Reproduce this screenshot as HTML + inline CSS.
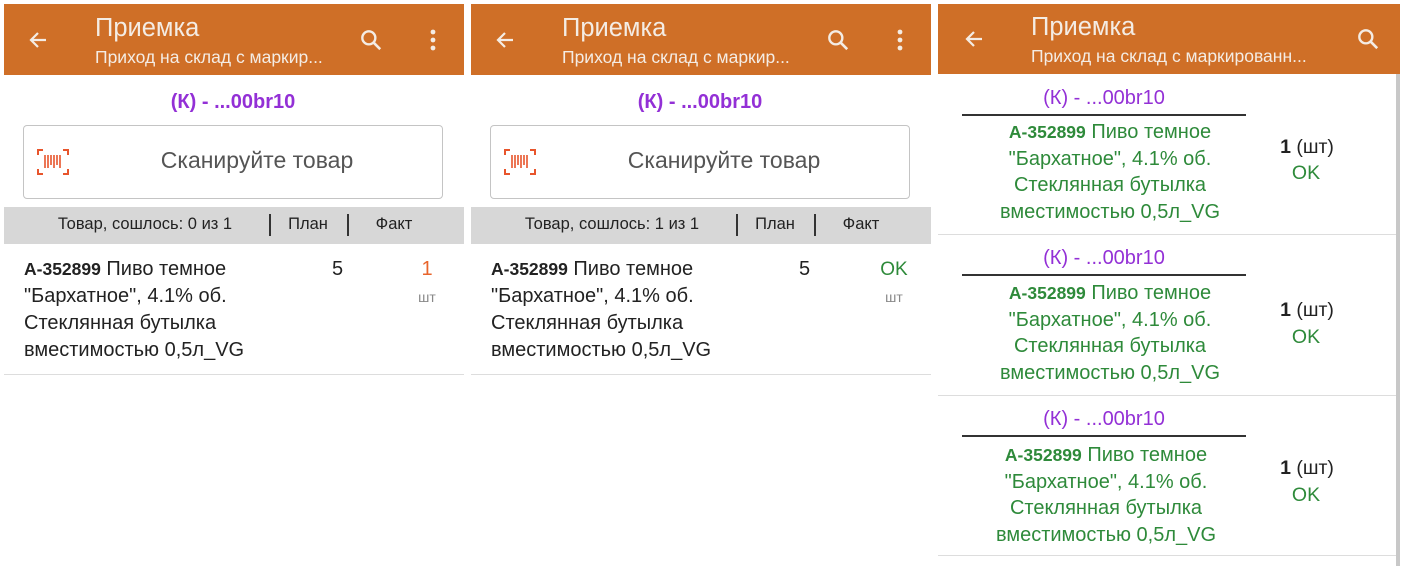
<!DOCTYPE html><html><head><meta charset="utf-8"><style>
*{margin:0;padding:0;box-sizing:border-box}
body{width:1408px;height:566px;background:#fff;position:relative;overflow:hidden;font-family:"Liberation Sans","Noto Sans CJK SC",sans-serif;color:#222}
.a{position:absolute;white-space:nowrap}
.hdr{position:absolute;top:4px;height:71px;background:#cf6f27}
.t{font-size:25.5px;color:#f4ece4}
.s{font-size:17.5px;color:#f4ece4}
.pu{color:#9330d6;font-size:20px}
.g{color:#2e8a3a;font-size:20px;text-align:center;line-height:26.7px}
.c{transform:translateX(-50%)}
.it{font-size:20px;line-height:27px}
.it b,.g b{font-size:17.5px}
</style></head><body>
<!-- panel 1 -->
<div class="hdr" style="left:4px;width:460px"></div>
<svg class="a" style="left:26px;top:28px" width="24" height="24" viewBox="0 0 24 24"><path d="M20 12H5M12 5l-7 7 7 7" stroke="#f4ece4" stroke-width="2.2" fill="none"/></svg>
<div class="a t" style="left:95px;top:14px">Приемка</div>
<div class="a s" style="left:95px;top:47px">Приход на склад с маркир...</div>
<svg class="a" style="left:358px;top:27px" width="26" height="26" viewBox="0 0 24 24"><circle cx="10" cy="10" r="6" stroke="#f4ece4" stroke-width="2.2" fill="none"/><path d="M14.5 14.5l6 6" stroke="#f4ece4" stroke-width="2.4"/></svg>
<svg class="a" style="left:429px;top:28px" width="8" height="24"><circle cx="4" cy="4" r="2.4" fill="#f4ece4"/><circle cx="4" cy="12" r="2.4" fill="#f4ece4"/><circle cx="4" cy="20" r="2.4" fill="#f4ece4"/></svg>
<div class="a pu c" style="left:233px;top:91px;font-weight:bold">(К) - ...00br10</div>
<div class="a" style="left:23px;top:125px;width:420px;height:74px;border:1.5px solid #c4c4c4;border-radius:4px"></div>
<svg class="a" style="left:37px;top:149px" width="32" height="26" viewBox="0 0 32 26"><path d="M1 6V1h5M26 1h5v5M31 20v5h-5M6 25H1v-5" stroke="#e8552c" stroke-width="2" fill="none"/><path d="M8 6v13M11 6v13M14 6v10M17 6v13M20 6v10M23 6v13" stroke="#e8552c" stroke-width="1.6"/></svg>
<div class="a c" style="left:257px;top:147px;font-size:23px;color:#555">Сканируйте товар</div>
<div class="a" style="left:4px;top:207px;width:460px;height:37px;background:#d7d7d7"></div>
<div class="a c" style="left:145px;top:215px;font-size:16.5px">Товар, сошлось: 0 из 1</div>
<div class="a" style="left:269px;top:214px;width:1.5px;height:22px;background:#333"></div>
<div class="a c" style="left:308px;top:215px;font-size:16.5px">План</div>
<div class="a" style="left:347px;top:214px;width:1.5px;height:22px;background:#333"></div>
<div class="a c" style="left:394px;top:215px;font-size:16.5px">Факт</div>
<div class="a it" style="left:24px;top:256px"><b>А-352899</b> Пиво темное<br>"Бархатное", 4.1% об.<br>Стеклянная бутылка<br>вместимостью 0,5л_VG</div>
<div class="a" style="left:332px;top:258px;font-size:20px">5</div>
<div class="a c" style="left:427px;top:258px;font-size:20px;color:#e8652c">1</div>
<div class="a c" style="left:427px;top:289px;font-size:14px;color:#888">шт</div>
<div class="a" style="left:4px;top:374px;width:460px;height:1px;background:#ddd"></div>
<!-- panel 2 -->
<div class="hdr" style="left:471px;width:460px"></div>
<svg class="a" style="left:493px;top:28px" width="24" height="24" viewBox="0 0 24 24"><path d="M20 12H5M12 5l-7 7 7 7" stroke="#f4ece4" stroke-width="2.2" fill="none"/></svg>
<div class="a t" style="left:562px;top:14px">Приемка</div>
<div class="a s" style="left:562px;top:47px">Приход на склад с маркир...</div>
<svg class="a" style="left:825px;top:27px" width="26" height="26" viewBox="0 0 24 24"><circle cx="10" cy="10" r="6" stroke="#f4ece4" stroke-width="2.2" fill="none"/><path d="M14.5 14.5l6 6" stroke="#f4ece4" stroke-width="2.4"/></svg>
<svg class="a" style="left:896px;top:28px" width="8" height="24"><circle cx="4" cy="4" r="2.4" fill="#f4ece4"/><circle cx="4" cy="12" r="2.4" fill="#f4ece4"/><circle cx="4" cy="20" r="2.4" fill="#f4ece4"/></svg>
<div class="a pu c" style="left:700px;top:91px;font-weight:bold">(К) - ...00br10</div>
<div class="a" style="left:490px;top:125px;width:420px;height:74px;border:1.5px solid #c4c4c4;border-radius:4px"></div>
<svg class="a" style="left:504px;top:149px" width="32" height="26" viewBox="0 0 32 26"><path d="M1 6V1h5M26 1h5v5M31 20v5h-5M6 25H1v-5" stroke="#e8552c" stroke-width="2" fill="none"/><path d="M8 6v13M11 6v13M14 6v10M17 6v13M20 6v10M23 6v13" stroke="#e8552c" stroke-width="1.6"/></svg>
<div class="a c" style="left:724px;top:147px;font-size:23px;color:#555">Сканируйте товар</div>
<div class="a" style="left:471px;top:207px;width:460px;height:37px;background:#d7d7d7"></div>
<div class="a c" style="left:612px;top:215px;font-size:16.5px">Товар, сошлось: 1 из 1</div>
<div class="a" style="left:736px;top:214px;width:1.5px;height:22px;background:#333"></div>
<div class="a c" style="left:775px;top:215px;font-size:16.5px">План</div>
<div class="a" style="left:814px;top:214px;width:1.5px;height:22px;background:#333"></div>
<div class="a c" style="left:861px;top:215px;font-size:16.5px">Факт</div>
<div class="a it" style="left:491px;top:256px"><b>А-352899</b> Пиво темное<br>"Бархатное", 4.1% об.<br>Стеклянная бутылка<br>вместимостью 0,5л_VG</div>
<div class="a" style="left:799px;top:258px;font-size:20px">5</div>
<div class="a c" style="left:894px;top:259px;font-size:19px;color:#2e8a3a">OK</div>
<div class="a c" style="left:894px;top:289px;font-size:14px;color:#888">шт</div>
<div class="a" style="left:471px;top:374px;width:460px;height:1px;background:#ddd"></div>
<!-- panel 3 -->
<div class="hdr" style="left:938px;width:462px;height:70px"></div>
<svg class="a" style="left:962px;top:27px" width="24" height="24" viewBox="0 0 24 24"><path d="M20 12H5M12 5l-7 7 7 7" stroke="#f4ece4" stroke-width="2.2" fill="none"/></svg>
<div class="a t" style="left:1031px;top:13px">Приемка</div>
<div class="a s" style="left:1031px;top:46px">Приход на склад с маркированн...</div>
<svg class="a" style="left:1355px;top:26px" width="26" height="26" viewBox="0 0 24 24"><circle cx="10" cy="10" r="6" stroke="#f4ece4" stroke-width="2.2" fill="none"/><path d="M14.5 14.5l6 6" stroke="#f4ece4" stroke-width="2.4"/></svg>
<div class="a" style="left:1396px;top:74px;width:4px;height:492px;background:#c8c8c8"></div>

<div class="a pu c" style="left:1104px;top:87px">(К) - ...00br10</div>
<div class="a" style="left:962px;top:114px;width:284px;height:1.5px;background:#333"></div>
<div class="a g c" style="left:1110px;top:119px"><b>А-352899</b> Пиво темное<br>"Бархатное", 4.1% об.<br>Стеклянная бутылка<br>вместимостью 0,5л_VG</div>
<div class="a c" style="left:1307px;top:136px;font-size:19.5px"><b>1</b> (шт)</div>
<div class="a c" style="left:1306px;top:162px;font-size:19.5px;color:#2e8a3a">OK</div>
<div class="a" style="left:938px;top:234px;width:458px;height:1px;background:#ddd"></div>

<div class="a pu c" style="left:1104px;top:247px">(К) - ...00br10</div>
<div class="a" style="left:962px;top:274px;width:284px;height:1.5px;background:#333"></div>
<div class="a g c" style="left:1110px;top:280px"><b>А-352899</b> Пиво темное<br>"Бархатное", 4.1% об.<br>Стеклянная бутылка<br>вместимостью 0,5л_VG</div>
<div class="a c" style="left:1307px;top:299px;font-size:19.5px"><b>1</b> (шт)</div>
<div class="a c" style="left:1306px;top:326px;font-size:19.5px;color:#2e8a3a">OK</div>
<div class="a" style="left:938px;top:395px;width:458px;height:1px;background:#ddd"></div>

<div class="a pu c" style="left:1104px;top:408px">(К) - ...00br10</div>
<div class="a" style="left:962px;top:435px;width:284px;height:1.5px;background:#333"></div>
<div class="a g c" style="left:1106px;top:442px"><b>А-352899</b> Пиво темное<br>"Бархатное", 4.1% об.<br>Стеклянная бутылка<br>вместимостью 0,5л_VG</div>
<div class="a c" style="left:1307px;top:457px;font-size:19.5px"><b>1</b> (шт)</div>
<div class="a c" style="left:1306px;top:484px;font-size:19.5px;color:#2e8a3a">OK</div>
<div class="a" style="left:938px;top:555px;width:458px;height:1px;background:#ddd"></div>
</body></html>
